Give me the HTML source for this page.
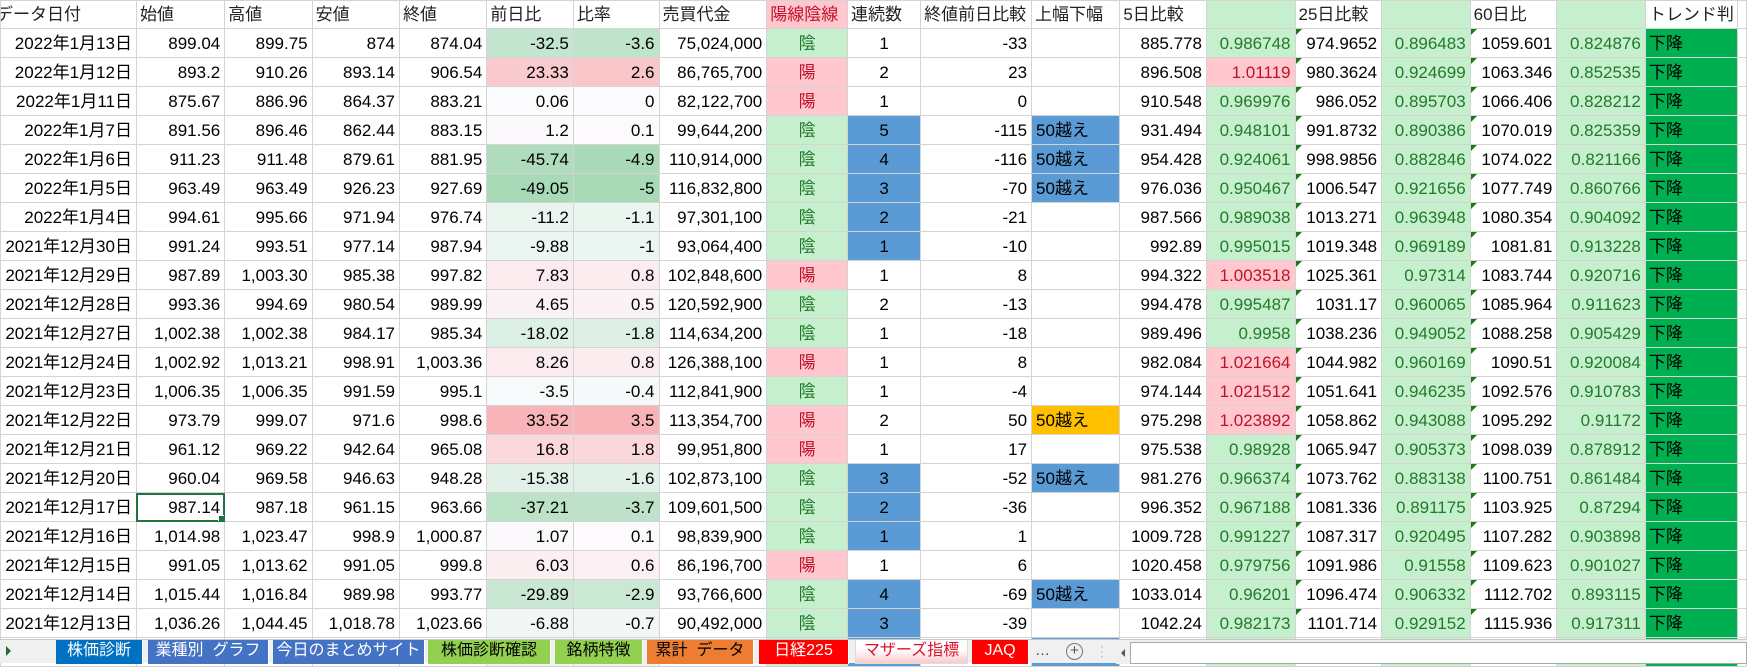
<!DOCTYPE html>
<html><head><meta charset="utf-8">
<style>
*{margin:0;padding:0;box-sizing:border-box}
body{width:1747px;height:663px;overflow:hidden;background:#fff;font-family:"Liberation Sans","Noto Sans CJK JP",sans-serif;font-size:17px;color:#000;position:relative}
table{border-collapse:collapse;table-layout:fixed;position:absolute;left:0;top:0}
td{border:1px solid #d4d4d4;height:29px;padding:0 4px;white-space:nowrap;overflow:hidden;text-align:right;line-height:27px;position:relative}
tr.h td{height:28px;text-align:left;padding:0 3px;color:#222}
.c{text-align:center}.l{text-align:left}
.g{background:#c6efce;color:#217a2a}
.p{background:#ffc7ce;color:#c0102a}
.b{background:#5b9bd5}
.o{background:#ffc000}
.t{background:#00b050;text-align:left;padding-left:3px}
.tri::before{content:"";position:absolute;left:0;top:0;border-top:6px solid #1a7a1a;border-right:6px solid transparent}
.sel{outline:2px solid #217346;outline-offset:-2px}
.sel::after{content:"";position:absolute;right:-1px;bottom:-1px;width:5px;height:5px;background:#217346;border:1px solid #fff}
#tabs{position:absolute;left:0;top:639px;width:1747px;height:24px;background:#f0f0f0;border-top:1px solid #c8c8c8}
.tab{position:absolute;top:0;height:24px;line-height:22px;font-size:16px;color:#fff;text-align:center;border-right:1px solid #fff}
</style></head><body>
<table>
<colgroup><col style="width:136px"><col style="width:89px"><col style="width:88px"><col style="width:88px"><col style="width:88px"><col style="width:88px"><col style="width:88px"><col style="width:108px"><col style="width:81px"><col style="width:74px"><col style="width:111px"><col style="width:89px"><col style="width:87px"><col style="width:89px"><col style="width:87px"><col style="width:89px"><col style="width:87px"><col style="width:89px"><col style="width:87px"><col style="width:4px"></colgroup>
<tr class="h"><td style="text-indent:-9px">データ日付</td><td>始値</td><td>高値</td><td>安値</td><td>終値</td><td>前日比</td><td>比率</td><td>売買代金</td><td style="background:#ffc7ce;color:#c0102a">陽線陰線</td><td>連続数</td><td>終値前日比較</td><td>上幅下幅</td><td>5日比較</td><td style="background:#c6efce"></td><td>25日比較</td><td style="background:#c6efce"></td><td>60日比</td><td style="background:#c6efce"></td><td>トレンド判</td><td></td></tr>
<tr><td>2022年1月13日</td><td>899.04</td><td>899.75</td><td>874</td><td>874.04</td><td style="background:#c4e5cf">-32.5</td><td style="background:#c0e4cb">-3.6</td><td>75,024,000</td><td class="c g">陰</td><td class="c">1</td><td>-33</td><td></td><td>885.778</td><td class="g">0.986748</td><td class="tri">974.9652</td><td class="g">0.896483</td><td class="tri">1059.601</td><td class="g">0.824876</td><td class="t">下降</td><td></td></tr>
<tr><td>2022年1月12日</td><td>893.2</td><td>910.26</td><td>893.14</td><td>906.54</td><td style="background:#f9cace">23.33</td><td style="background:#f9c7ca">2.6</td><td>86,765,700</td><td class="c p">陽</td><td class="c">2</td><td>23</td><td></td><td>896.508</td><td class="p">1.01119</td><td class="tri">980.3624</td><td class="g">0.924699</td><td class="tri">1063.346</td><td class="g">0.852535</td><td class="t">下降</td><td></td></tr>
<tr><td>2022年1月11日</td><td>875.67</td><td>886.96</td><td>864.37</td><td>883.21</td><td style="background:#fcfcff">0.06</td><td style="background:#fcfcff">0</td><td>82,122,700</td><td class="c p">陽</td><td class="c">1</td><td>0</td><td></td><td>910.548</td><td class="g">0.969976</td><td class="tri">986.052</td><td class="g">0.895703</td><td class="tri">1066.406</td><td class="g">0.828212</td><td class="t">下降</td><td></td></tr>
<tr><td>2022年1月7日</td><td>891.56</td><td>896.46</td><td>862.44</td><td>883.15</td><td style="background:#fcf9fc">1.2</td><td style="background:#fcfafd">0.1</td><td>99,644,200</td><td class="c g">陰</td><td class="c b">5</td><td>-115</td><td class="l b">50越え</td><td>931.494</td><td class="g">0.948101</td><td class="tri">991.8732</td><td class="g">0.890386</td><td class="tri">1070.019</td><td class="g">0.825359</td><td class="t">下降</td><td></td></tr>
<tr><td>2022年1月6日</td><td>911.23</td><td>911.48</td><td>879.61</td><td>881.95</td><td style="background:#aedcbc">-45.74</td><td style="background:#aadbb8">-4.9</td><td>110,914,000</td><td class="c g">陰</td><td class="c b">4</td><td>-116</td><td class="l b">50越え</td><td>954.428</td><td class="g">0.924061</td><td class="tri">998.9856</td><td class="g">0.882846</td><td class="tri">1074.022</td><td class="g">0.821166</td><td class="t">下降</td><td></td></tr>
<tr><td>2022年1月5日</td><td>963.49</td><td>963.49</td><td>926.23</td><td>927.69</td><td style="background:#a8dab7">-49.05</td><td style="background:#a8dab7">-5</td><td>116,832,800</td><td class="c g">陰</td><td class="c b">3</td><td>-70</td><td class="l b">50越え</td><td>976.036</td><td class="g">0.950467</td><td class="tri">1006.547</td><td class="g">0.921656</td><td class="tri">1077.749</td><td class="g">0.860766</td><td class="t">下降</td><td></td></tr>
<tr><td>2022年1月4日</td><td>994.61</td><td>995.66</td><td>971.94</td><td>976.74</td><td style="background:#e9f4ef">-11.2</td><td style="background:#eaf5ef">-1.1</td><td>97,301,100</td><td class="c g">陰</td><td class="c b">2</td><td>-21</td><td></td><td>987.566</td><td class="g">0.989038</td><td class="tri">1013.271</td><td class="g">0.963948</td><td class="tri">1080.354</td><td class="g">0.904092</td><td class="t">下降</td><td></td></tr>
<tr><td>2021年12月30日</td><td>991.24</td><td>993.51</td><td>977.14</td><td>987.94</td><td style="background:#ebf5f1">-9.88</td><td style="background:#ebf5f1">-1</td><td>93,064,400</td><td class="c g">陰</td><td class="c b">1</td><td>-10</td><td></td><td>992.89</td><td class="g">0.995015</td><td class="tri">1019.348</td><td class="g">0.969189</td><td class="tri">1081.81</td><td class="g">0.913228</td><td class="t">下降</td><td></td></tr>
<tr><td>2021年12月29日</td><td>987.89</td><td>1,003.30</td><td>985.38</td><td>997.82</td><td style="background:#fbebee">7.83</td><td style="background:#fbecef">0.8</td><td>102,848,600</td><td class="c p">陽</td><td class="c">1</td><td>8</td><td></td><td>994.322</td><td class="p">1.003518</td><td class="tri">1025.361</td><td class="g">0.97314</td><td class="tri">1083.744</td><td class="g">0.920716</td><td class="t">下降</td><td></td></tr>
<tr><td>2021年12月28日</td><td>993.36</td><td>994.69</td><td>980.54</td><td>989.99</td><td style="background:#fbf2f5">4.65</td><td style="background:#fbf2f5">0.5</td><td>120,592,900</td><td class="c g">陰</td><td class="c">2</td><td>-13</td><td></td><td>994.478</td><td class="g">0.995487</td><td class="tri">1031.17</td><td class="g">0.960065</td><td class="tri">1085.964</td><td class="g">0.911623</td><td class="t">下降</td><td></td></tr>
<tr><td>2021年12月27日</td><td>1,002.38</td><td>1,002.38</td><td>984.17</td><td>985.34</td><td style="background:#ddf0e5">-18.02</td><td style="background:#def0e5">-1.8</td><td>114,634,200</td><td class="c g">陰</td><td class="c">1</td><td>-18</td><td></td><td>989.496</td><td class="g">0.9958</td><td class="tri">1038.236</td><td class="g">0.949052</td><td class="tri">1088.258</td><td class="g">0.905429</td><td class="t">下降</td><td></td></tr>
<tr><td>2021年12月24日</td><td>1,002.92</td><td>1,013.21</td><td>998.91</td><td>1,003.36</td><td style="background:#fbeaee">8.26</td><td style="background:#fbecef">0.8</td><td>126,388,100</td><td class="c p">陽</td><td class="c">1</td><td>8</td><td></td><td>982.084</td><td class="p">1.021664</td><td class="tri">1044.982</td><td class="g">0.960169</td><td class="tri">1090.51</td><td class="g">0.920084</td><td class="t">下降</td><td></td></tr>
<tr><td>2021年12月23日</td><td>1,006.35</td><td>1,006.35</td><td>991.59</td><td>995.1</td><td style="background:#f6fafa">-3.5</td><td style="background:#f5f9f9">-0.4</td><td>112,841,900</td><td class="c g">陰</td><td class="c">1</td><td>-4</td><td></td><td>974.144</td><td class="p">1.021512</td><td class="tri">1051.641</td><td class="g">0.946235</td><td class="tri">1092.576</td><td class="g">0.910783</td><td class="t">下降</td><td></td></tr>
<tr><td>2021年12月22日</td><td>973.79</td><td>999.07</td><td>971.6</td><td>998.6</td><td style="background:#f8b4b8">33.52</td><td style="background:#f8b4b8">3.5</td><td>113,354,700</td><td class="c p">陽</td><td class="c">2</td><td>50</td><td class="l o">50越え</td><td>975.298</td><td class="p">1.023892</td><td class="tri">1058.862</td><td class="g">0.943088</td><td class="tri">1095.292</td><td class="g">0.91172</td><td class="t">下降</td><td></td></tr>
<tr><td>2021年12月21日</td><td>961.12</td><td>969.22</td><td>942.64</td><td>965.08</td><td style="background:#fad8dc">16.8</td><td style="background:#fad7da">1.8</td><td>99,951,800</td><td class="c p">陽</td><td class="c">1</td><td>17</td><td></td><td>975.538</td><td class="g">0.98928</td><td class="tri">1065.947</td><td class="g">0.905373</td><td class="tri">1098.039</td><td class="g">0.878912</td><td class="t">下降</td><td></td></tr>
<tr><td>2021年12月20日</td><td>960.04</td><td>969.58</td><td>946.63</td><td>948.28</td><td style="background:#e2f1e8">-15.38</td><td style="background:#e1f1e8">-1.6</td><td>102,873,100</td><td class="c g">陰</td><td class="c b">3</td><td>-52</td><td class="l b">50越え</td><td>981.276</td><td class="g">0.966374</td><td class="tri">1073.762</td><td class="g">0.883138</td><td class="tri">1100.751</td><td class="g">0.861484</td><td class="t">下降</td><td></td></tr>
<tr><td>2021年12月17日</td><td class="sel">987.14</td><td>987.18</td><td>961.15</td><td>963.66</td><td style="background:#bce2c8">-37.21</td><td style="background:#bee3ca">-3.7</td><td>109,601,500</td><td class="c g">陰</td><td class="c b">2</td><td>-36</td><td></td><td>996.352</td><td class="g">0.967188</td><td class="tri">1081.336</td><td class="g">0.891175</td><td class="tri">1103.925</td><td class="g">0.87294</td><td class="t">下降</td><td></td></tr>
<tr><td>2021年12月16日</td><td>1,014.98</td><td>1,023.47</td><td>998.9</td><td>1,000.87</td><td style="background:#fcf9fc">1.07</td><td style="background:#fcfafd">0.1</td><td>98,839,900</td><td class="c g">陰</td><td class="c b">1</td><td>1</td><td></td><td>1009.728</td><td class="g">0.991227</td><td class="tri">1087.317</td><td class="g">0.920495</td><td class="tri">1107.282</td><td class="g">0.903898</td><td class="t">下降</td><td></td></tr>
<tr><td>2021年12月15日</td><td>991.05</td><td>1,013.62</td><td>991.05</td><td>999.8</td><td style="background:#fbeff2">6.03</td><td style="background:#fbf0f3">0.6</td><td>86,196,700</td><td class="c p">陽</td><td class="c">1</td><td>6</td><td></td><td>1020.458</td><td class="g">0.979756</td><td class="tri">1091.986</td><td class="g">0.91558</td><td class="tri">1109.623</td><td class="g">0.901027</td><td class="t">下降</td><td></td></tr>
<tr><td>2021年12月14日</td><td>1,015.44</td><td>1,016.84</td><td>989.98</td><td>993.77</td><td style="background:#c9e7d3">-29.89</td><td style="background:#cbe8d5">-2.9</td><td>93,766,600</td><td class="c g">陰</td><td class="c b">4</td><td>-69</td><td class="l b">50越え</td><td>1033.014</td><td class="g">0.96201</td><td class="tri">1096.474</td><td class="g">0.906332</td><td class="tri">1112.702</td><td class="g">0.893115</td><td class="t">下降</td><td></td></tr>
<tr><td>2021年12月13日</td><td>1,036.26</td><td>1,044.45</td><td>1,018.78</td><td>1,023.66</td><td style="background:#f0f7f5">-6.88</td><td style="background:#f0f7f5">-0.7</td><td>90,492,000</td><td class="c g">陰</td><td class="c b">3</td><td>-39</td><td></td><td>1042.24</td><td class="g">0.982173</td><td class="tri">1101.714</td><td class="g">0.929152</td><td class="tri">1115.936</td><td class="g">0.917311</td><td class="t">下降</td><td></td></tr>
<tr><td></td><td></td><td></td><td></td><td></td><td style="background:#eef6f2"></td><td style="background:#eef6f2"></td><td></td><td class="g"></td><td class="b"></td><td></td><td class="b"></td><td></td><td class="g"></td><td></td><td class="g"></td><td></td><td class="g"></td><td class="t"></td><td></td></tr>
</table>
<div id="tabs">
<div style="position:absolute;left:6px;top:6px;width:0;height:0;border-left:5px solid #1f6b3a;border-top:5px solid transparent;border-bottom:5px solid transparent"></div>
<div class="tab" style="left:56px;width:87px;background:#0070c0">株価診断</div>
<div class="tab" style="left:148px;width:121px;background:#4472c4">業種別&nbsp; グラフ</div>
<div class="tab" style="left:273px;width:152px;background:#4472c4">今日のまとめサイト</div>
<div class="tab" style="left:428px;width:123px;background:#92d050;color:#000">株価診断確認</div>
<div class="tab" style="left:555px;width:88px;background:#92d050;color:#000">銘柄特徴</div>
<div class="tab" style="left:647px;width:107px;background:#ed7d31;color:#000">累計&nbsp; データ</div>
<div class="tab" style="left:759px;width:90px;background:#ff0000">日経225</div>
<div class="tab" style="left:855px;width:113px;background:linear-gradient(#fff 40%,#f9c9cc);color:#e0102a;border:1px solid #ddd;border-top:none">マザーズ指標</div>
<div class="tab" style="left:972px;width:57px;background:#ff0000">JAQ</div>
<div style="position:absolute;left:1035px;top:0;font-size:15px;color:#444;line-height:22px">…</div>
<div style="position:absolute;left:1066px;top:3px;width:17px;height:17px;border:1px solid #777;border-radius:50%;text-align:center;line-height:14px;font-size:15px;color:#555">+</div>
<div style="position:absolute;left:1100px;top:4px;font-size:12px;color:#aaa;line-height:5px">·<br>·<br>·</div>
<div style="position:absolute;left:1116px;top:2px;width:631px;height:22px;background:#fff;border:1px solid #aaa"></div>
<div style="position:absolute;left:1116px;top:2px;width:15px;height:22px;border-right:1px solid #aaa;background:#f0f0f0"></div>
<div style="position:absolute;left:1121px;top:9px;width:0;height:0;border-right:4px solid #555;border-top:4px solid transparent;border-bottom:4px solid transparent"></div>
</div>
</body></html>
